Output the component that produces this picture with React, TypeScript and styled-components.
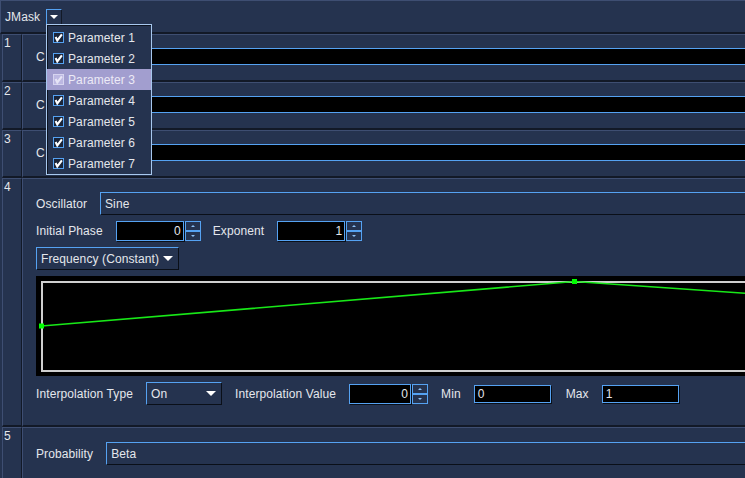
import React from "react";
import styled, { createGlobalStyle, css } from "styled-components";

const NAVY = "#25334f";
const BLUE = "#55a2f2";
const LIGHT = "#3e4e72";
const DARK = "#121927";
const TEXT = "#e4e7ec";

const GlobalStyle = createGlobalStyle`
  html, body {
    margin: 0;
    padding: 0;
    background: ${NAVY};
    overflow: hidden;
  }
  body {
    font-family: "Liberation Sans", Arial, sans-serif;
    font-size: 12px;
    letter-spacing: 0.1px;
    color: ${TEXT};
  }
`;

const raised = css`
  box-sizing: border-box;
  border-top: 1px solid ${LIGHT};
  border-left: 1px solid ${LIGHT};
  border-bottom: 2px solid ${DARK};
  border-right: 1px solid ${DARK};
`;

const Page = styled.div`
  position: relative;
  width: 790px;
  height: 478px;
  overflow: hidden;
`;

const TopBar = styled.div`
  ${raised}
  height: 34px;
  display: flex;
  align-items: center;
  gap: 6px;
  padding-left: 4px;
`;

const ArrowButton = styled.div`
  box-sizing: border-box;
  width: 16px;
  height: 16px;
  margin-top: 1px;
  border-top: 1px solid ${BLUE};
  border-left: 1px solid ${BLUE};
  border-bottom: 1px solid ${DARK};
  border-right: 1px solid ${DARK};
  display: flex;
  align-items: center;
  justify-content: center;
`;

const Caret = styled.span<{ $size?: number }>`
  width: 0;
  height: 0;
  border-left: ${(p) => p.$size ?? 5}px solid transparent;
  border-right: ${(p) => p.$size ?? 5}px solid transparent;
  border-top: ${(p) => p.$size ?? 5}px solid #ffffff;
`;

const Section = styled.div<{ $h: number }>`
  display: flex;
  height: ${(p) => p.$h}px;
  padding-left: 2px;
`;

const NumCell = styled.div`
  ${raised}
  width: 20px;
  padding: 1px 0 0 1px;
  line-height: 14px;
`;

const Body = styled.div<{ $top?: number }>`
  ${raised}
  flex: 1;
  display: flex;
  flex-direction: column;
  gap: 6px;
  padding: ${(p) => p.$top ?? 13}px 0 0 13px;
  min-width: 0;
`;

const Line = styled.div<{ $h?: number }>`
  display: flex;
  align-items: center;
  gap: 13px;
  height: ${(p) => p.$h ?? 23}px;
`;

const Label = styled.span<{ $lead?: number; $min?: number }>`
  white-space: nowrap;
  margin-left: ${(p) => p.$lead ?? 0}px;
  min-width: ${(p) => p.$min ?? 0}px;
`;

const StripField = styled.div`
  flex: 1;
  box-sizing: border-box;
  height: 17px;
  background: #000;
  border-top: 1px solid ${BLUE};
  border-bottom: 1px solid ${BLUE};
`;

const Combo = styled.div<{ $w?: number }>`
  box-sizing: border-box;
  height: 23px;
  ${(p) => (p.$w ? `width: ${p.$w}px;` : "flex: 1;")}
  display: flex;
  align-items: center;
  justify-content: space-between;
  padding: 0 5px 0 4px;
  background: ${NAVY};
  border-top: 1px solid ${BLUE};
  border-left: 1px solid ${BLUE};
  border-bottom: 1px solid #0a0f18;
  border-right: 1px solid #0a0f18;
  white-space: nowrap;
`;

const TextBox = styled.div<{ $w: number; $h?: number; $right?: boolean }>`
  box-sizing: border-box;
  width: ${(p) => p.$w}px;
  height: ${(p) => p.$h ?? 18}px;
  background: #000;
  border: 1px solid ${BLUE};
  box-shadow: 1px 1px 0 #0a0f18;
  display: flex;
  align-items: center;
  justify-content: ${(p) => (p.$right ? "flex-end" : "flex-start")};
  padding: 0 2px 0 3px;
  line-height: 14px;
`;

const Spinner = styled.div`
  display: flex;
  gap: 1px;
`;

const SpinButtons = styled.div`
  display: flex;
  flex-direction: column;
`;

const SpinButton = styled.div`
  box-sizing: border-box;
  width: 16px;
  height: 10px;
  border: 1px solid ${BLUE};
  background: ${NAVY};
  display: flex;
  align-items: center;
  justify-content: center;
`;

const SpinArrow = styled.span<{ $up?: boolean }>`
  width: 0;
  height: 0;
  border-left: 2px solid transparent;
  border-right: 2px solid transparent;
  ${(p) =>
    p.$up
      ? `border-bottom: 2px solid #8cc0f5;`
      : `border-top: 2px solid #8cc0f5;`}
`;

const Graph = styled.div`
  height: 100px;
  background: #000;
  margin-right: -1px;
`;

const Menu = styled.div`
  position: absolute;
  top: 24px;
  left: 46px;
  width: 106px;
  box-sizing: border-box;
  padding: 2px 0 0 0;
  background: ${NAVY};
  border: 1px solid #a8c8ee;
  box-shadow: inset 1px 1px 0 #0d1320;
`;

const MenuItem = styled.div<{ $active?: boolean }>`
  height: 21px;
  display: flex;
  align-items: center;
  gap: 4px;
  padding-left: 6px;
  background: ${(p) => (p.$active ? "#a29ecf" : "transparent")};
  color: ${(p) => (p.$active ? "#eceaf6" : TEXT)};
  white-space: nowrap;
`;

const Check = ({ active }: { active?: boolean }) => (
  <svg width="11" height="11" viewBox="0 0 11 11">
    <rect
      x="0.5"
      y="0.5"
      width="10"
      height="10"
      fill={active ? "#bcb8e2" : "#1a2438"}
      stroke={active ? "#d6d4f0" : BLUE}
    />
    <path
      d="M2.6 5 L4.3 8.5 L8.9 2.3"
      fill="none"
      stroke={active ? "#e6e4f6" : "#ffffff"}
      strokeWidth="2.1"
    />
  </svg>
);

const NumberSpinner = ({ value, w, h }: { value: string; w: number; h: number }) => (
  <Spinner>
    <TextBox $w={w} $h={h} $right>
      {value}
    </TextBox>
    <SpinButtons>
      <SpinButton>
        <SpinArrow $up />
      </SpinButton>
      <SpinButton>
        <SpinArrow />
      </SpinButton>
    </SpinButtons>
  </Spinner>
);

const params = ["Parameter 1", "Parameter 2", "Parameter 3", "Parameter 4", "Parameter 5", "Parameter 6", "Parameter 7"];

const App = () => {
  return (
    <Page>
      <GlobalStyle />
      <TopBar>
        <span>JMask</span>
        <ArrowButton>
          <Caret $size={4} />
        </ArrowButton>
      </TopBar>

      {/* rows 1-3: their labels sit under the open menu, only the first letter shows */}
      {[1, 2, 3].map((n) => (
        <Section key={n} $h={48}>
          <NumCell>{n}</NumCell>
          <Body>
            <Line $h={17}>
              <Label $min={52}>C</Label>
              <StripField />
            </Line>
          </Body>
        </Section>
      ))}

      <Section $h={249}>
        <NumCell>4</NumCell>
        <Body>
          <Line>
            <Label>Oscillator</Label>
            <Combo>Sine</Combo>
          </Line>
          <Line $h={20}>
            <Label>Initial Phase</Label>
            <NumberSpinner value="0" w={68} h={20} />
            <Label $lead={-1}>Exponent</Label>
            <NumberSpinner value="1" w={68} h={20} />
          </Line>
          <Line>
            <Combo $w={143}>
              Frequency (Constant) <Caret />
            </Combo>
          </Line>
          <Graph>
            <svg width="100%" height="100" style={{ display: "block" }}>
              <rect x="6" y="6" width="900" height="89" fill="none" stroke="#cfcfcf" strokeWidth="2" />
              <polyline
                points="5.5,50 538.5,5.5 800,23.5"
                fill="none"
                stroke="#18e818"
                strokeWidth="1.6"
              />
              <rect x="3" y="47.5" width="5" height="5" fill="#00ff00" />
              <rect x="536" y="3" width="5" height="5" fill="#00ff00" />
            </svg>
          </Graph>
          <Line>
            <Label>Interpolation Type</Label>
            <Combo $w={76}>
              On <Caret />
            </Combo>
            <Label>Interpolation Value</Label>
            <NumberSpinner value="0" w={62} h={20} />
            <Label>Min</Label>
            <TextBox $w={77}>0</TextBox>
            <Label $lead={2}>Max</Label>
            <TextBox $w={77}>1</TextBox>
          </Line>
        </Body>
      </Section>

      <Section $h={60}>
        <NumCell>5</NumCell>
        <Body $top={14}>
          <Line>
            <Label>Probability</Label>
            <Combo>Beta</Combo>
          </Line>
        </Body>
      </Section>

      <Menu>
        {params.map((p, i) => (
          <MenuItem key={p} $active={i === 2}>
            <Check active={i === 2} />
            {p}
          </MenuItem>
        ))}
      </Menu>
    </Page>
  );
};

export default App;
